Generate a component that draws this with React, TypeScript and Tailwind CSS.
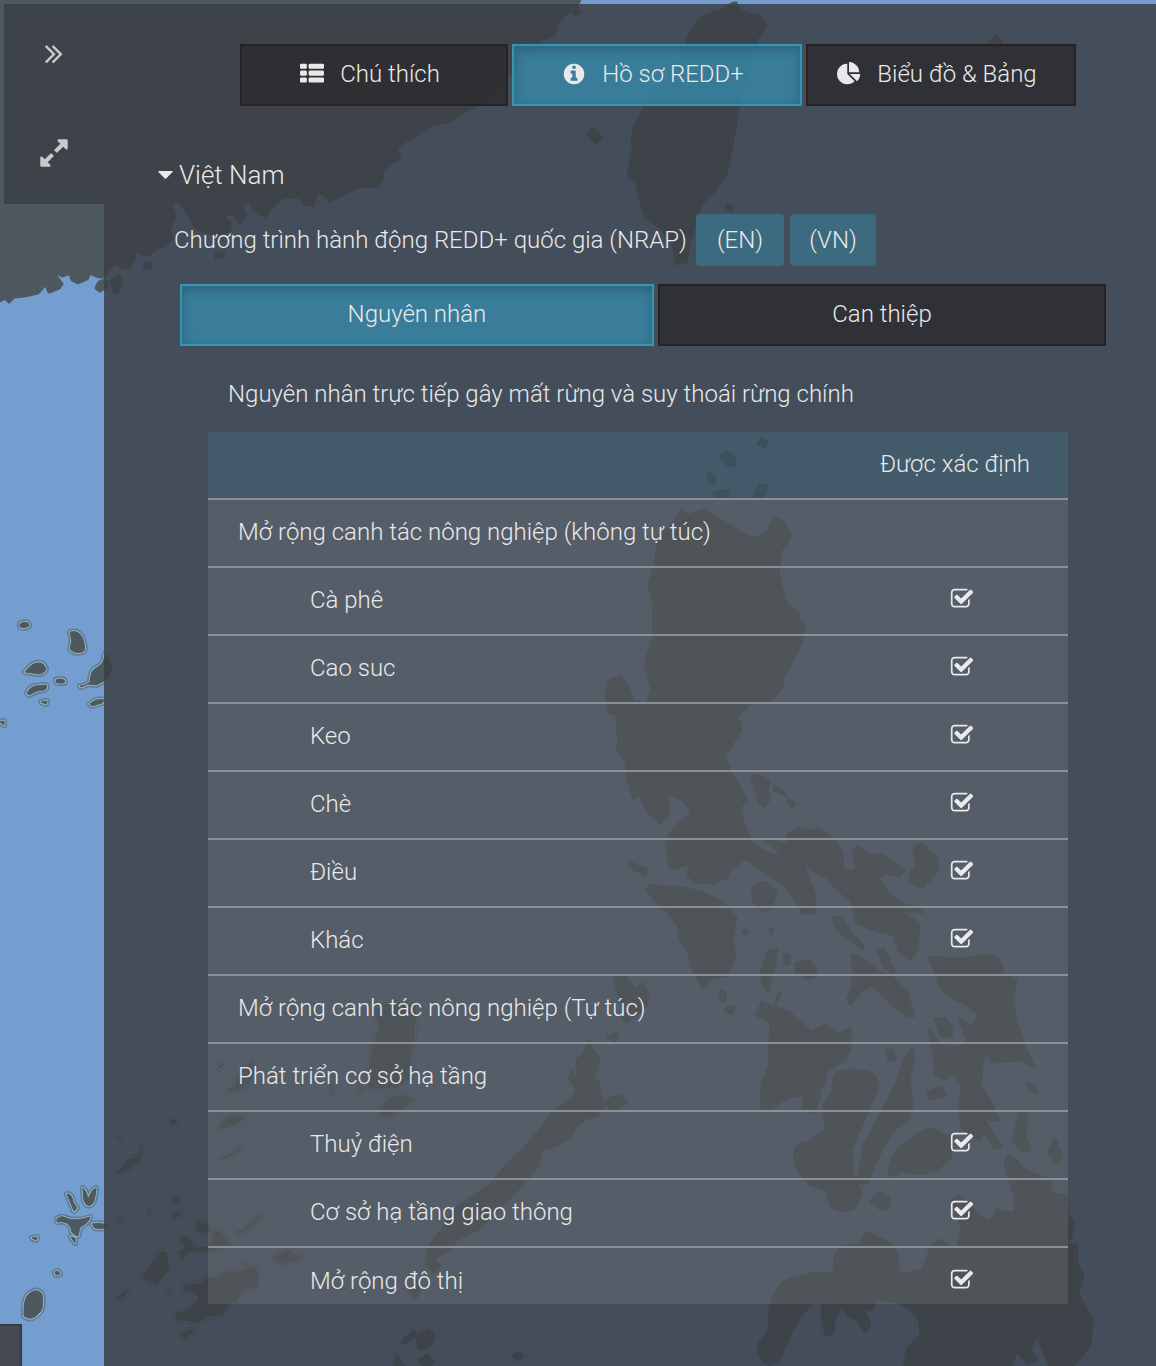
import React, { useState } from "react";

const LAND: string[] = [
  // mainland coast
  "M0 0H580L577 5 565 15 558 22 554 35 540 40 536 52 530 60 514 68 500 84 487 95 478 104 467 110 450 121 430 126 416 136 405 141 396 148 400 158 392 163 383 170 382 180 376 187 361 186 345 193 330 201 326 196 318 192 313 206 305 204 299 197 283 197 272 207 265 217 252 208 253 200 241 206 246 214 240 224 233 213 221 216 230 222 230 231 217 234 205 232 196 228 188 214 179 201 171 202 175 216 169 230 173 238 165 246 158 247 149 255 141 254 135 250 134 260 129 268 122 267 115 263 108 271 104 277 98 277 90 273 87 279 78 283 72 280 70 273 62 276 54 270 57 277 62 284 59 288 49 292 46 285 47 279 44 286 38 293 24 296 14 297 9 302 5 298 0 301Z",
  "M110 282l8-6 4 5-3 10-4 2-3-7zM96 288l3-6 6-2 2 7-7 4zM146 262l5 2-1 5-6-2zM216 254l8-2-2 5-6 1zM570 8l6-4 3 8-4 3z",
  // northern island
  "M701 18Q712 12 724 10Q731 2 736 3Q740 12 747 14L759 16 766 26 756 40 751 65 740 95 735 130 730 155 727 172 715 190 701 205 695 225 690 240 686 263 682 261 676 264 674 245 661 228 646 217 640 200 636 182 628 176 633 150 632 140 634 128 646 105 667 80 684 50 690 32Z",
  "M588 134l5-6 9 10-7 5zM727 205l5 1-1 5-4-2zM990 42l7-6 5 9-8 3zM720 456q6-5 11-2 6 6 4 11-6 3-9-2zM761 438l7 4-4 5-6-3zM709 473l6 5-1 6-6-6zM714 494q6-5 14-3v5l-12 1zM754 497l5-12 8 1-4 12z",
  // large central island
  "M676 520 682 510 687 516 704 510Q718 520 731 526Q748 540 760 537Q770 534 770 526L774 517 784 522 791 535 781 550 778 575 786 604 798 612 799 622 804 625 801 643 790 665 782 680 782 688 766 704 763 699 750 703 737 716 741 730 731 745 724 757 733 777 747 800 740 807 744 825 750 840Q756 852 784 858L776 848 763 838 788 845 788 835 800 828 812 831 819 829 834 840 843 855 842 869 849 872 857 868 852 852 858 847 870 855 883 855 904 870 900 876 887 873 876 877 891 895 903 904 923 912 895 910 915 920 919 925 917 950 910 960 899 951 894 935 876 930 857 923 851 900 838 890 826 876 812 870 803 860 806 873 815 895 814 913 803 913 792 895 781 882 765 872 746 858 729 870 727 877 712 883 695 882 688 875 690 862 680 867 670 868 666 840 675 827 691 815Q690 797 667 795L668 815 661 823 651 815 642 800 640 794 634 799 628 780 626 762 617 750 619 740 616 715 609 712 606 695 610 680 620 677 627 685 634 702 647 703 652 690 645 665 654 635 653 600 649 585 655 565 658 540Z",
  "M752 777q8-4 17 5l-2 8 2 10-5 6-5-4zM774 786l10 5 2 5-12-6zM788 800l7 3-3 4zM630 863l17 6-2 6-15-8zM753 888q6-6 14-5l9 10-4 12q-5 8-11 4l-8-8zM914 849q5-7 9-4l12 11q5 8 2 14l-8 10-6 7-14-5 2-10 6-5z",
  "M647 890Q648 884 655 886L682 888 704 893 722 902 736 918 732 940 735 955 727 975 712 978 703 988 698 980 691 965 689 953 680 940 678 925 668 912 653 898ZM745 929l3 2-2 3-3-2zM770 928l3 2-2 3zM768 951l9-1-3 18-6 24-5-8-2-11zM784 954l5 2 0 7-4 1zM796 963l12-2 8 8-1 7-8 3-11-8zM720 991l5 2v8l-5-2zM726 1008l8-1-2 6-6-1z",
  "M833 918 841 917 851 933 864 947 862 949 848 938 836 929ZM878 950 884 950 894 970 893 974 884 967ZM853 955 866 961 880 973 891 976 906 992 914 1016 906 1015 890 1002 872 985 860 992 850 1004 848 999 853 985Z",
  "M762 1002 768 1005 788 1012 798 1020 811 1032 826 1025 838 1035 850 1028 850 1050 844 1060 826 1071 824 1084 818 1090 820 1096 817 1106 812 1112 803 1109 805 1095Q784 1094 769 1112L762 1110 762 1085 769 1065 771 1023 757 1015ZM886 1049l7 3 2 7-6 1zM776 1003l3-11 2 1z",
  "M834 1075Q848 1068 858 1071Q872 1072 875 1077L878 1086 866 1115 851 1150 853 1175 861 1192 855 1208Q840 1214 831 1206L826 1190 811 1185Q798 1175 795 1160Q793 1142 808 1143L826 1130 824 1105 834 1090ZM871 1201l10-9 8 7-1 9-8 1z",
  "M912 1048 914 1060 909 1080 912 1105 908 1120 891 1132 879 1155 866 1184 858 1182 864 1145 883 1110 898 1080 905 1058ZM889 1172Q893 1150 908 1142Q922 1128 934 1130L952 1138 950 1158 936 1170Q920 1176 902 1170L893 1176Z",
  "M929 957 960 959 993 955Q1003 962 1003 974L1016 980 1012 1000 1016 1020 1024 1045 1033 1065 1020 1060 993 1062 984 1050 980 1085 990 1100 999 1120 984 1119 1001 1147 995 1148 984 1130 980 1140 963 1130 959 1110 963 1085 952 1073 946 1080 936 1075 934 1055 929 1030 940 1045 955 1047Q970 1045 967 1038L959 1020 972 1026 980 1015 963 1002Q942 996 938 980ZM935 1020l10-2 8 10-2 8-9 1zM928 1092l12-4 5 8-16 3zM1027 1083l8 4 2 6-8-3zM1013 1140 1020 1112 1027 1115 1025 1135 1030 1150 1024 1152ZM1048 1153l7-14 7 17-6 6z",
  "M1005 1165Q1006 1154 1012 1156L1024 1170 1049 1180 1052 1194 1066 1195 1068 1215 1073 1222 1071 1238 1062 1243 1077 1245 1077 1265 1083 1275 1078 1294 1092 1320 1090 1345 1073 1366H1050L1044 1352 1037 1335 1030 1350 1036 1360 1028 1364 1016 1350 1012 1366H904L908 1348 921 1335 920 1322Q910 1304 895 1302L876 1298 872 1310 864 1308 870 1325 866 1332 857 1320 847 1315 843 1305 834 1320 834 1333 826 1335 822 1320V1303L813 1302 801 1315 792 1330 783 1350Q780 1366 768 1364Q756 1358 759 1344L769 1330 770 1310Q776 1284 788 1280L811 1274 834 1273 835 1256 841 1247 860 1245 866 1232 883 1240Q896 1244 898 1262L900 1275 923 1270 931 1247 940 1240 957 1250 962 1230 952 1200 960 1197 978 1215 990 1222 998 1210Q1010 1214 1016 1212L1015 1195Z",
  // long south-western island
  "M590 1040 592 1050 599 1057 597 1068 593 1080 598 1082 600 1093 605 1105 598 1115 587 1118 577 1125 570 1138 557 1145 542 1149 539 1165 517 1190 500 1208 477 1230 456 1240 450 1250 433 1258 440 1266 435 1272 426 1265 428 1248 440 1232 458 1206 490 1185 507 1165 523 1150 540 1130 553 1112 570 1100 577 1090 570 1080 571 1071 578 1082 577 1060 583 1055Z",
  "M615 975 622 975 637 990 643 983 649 998 644 1008 627 1022 622 1018 624 1005 617 990ZM607 1037l10-5-2 10zM607 1100l13-5 7 7-10 8-8-1zM409 1290l8-9 2 10-4 8zM402 1342l11-11 3 3-10 9zM417 1336l12-6 5 6-3 9-12 4zM394 1364l3-9 6 11zM418 1360l10-5 5 8-8 3zM512 1356l7-4 4 4-5 4z",
];

const REEFS: string[] = [
  "M20 624q4-3 8-1l1 3q-4 3-9 1zM70 632q8-2 12 5 4 10 2 14-8 4-14-2 3-8 0-17zM25 672q6-8 12-9 7-1 9 6-1 4-7 5zM27 693q3-6 8-7l11-1q2 4-2 5l-7 1-8 4zM56 680q4-2 8 0 2 3-1 3h-6zM41 702l6-1-1 3zM80 686q6 0 10-4 0-12 8-15 6-3 7-13 6 5 7 14-2 10-6 12l-10 5-8-1-7 3zM90 704q6-6 14-4l-2 3-10 3zM0 722l4-1 0 4z",
  "M67 1194q5 0 6 8l4 6-3 3zM83 1188q4 4 5 12 3-10 8-12-1 12-3 15-5 6-9-2zM57 1219q4-4 9-1 8 4 24-1-1 6-10 10l-2 9q-7-2-7-8-4-8-14-6zM92 1224q8-2 15 1-2 5-12 3zM71 1237l4 1 0 5zM32 1238l5-1-1 3zM55 1272l3-1 2 3-4 1zM24 1311q0-14 6-18 7-5 12 1 2 14-2 18-8 10-16 4z",
  "M117 1173l10-13 11-3 5-12-4 15-10 9-11 5zM171 1119l6 2-2 4-5-2zM118 1137l3-1 0 3zM164 1116l1 2M173 1195l6 2-1 8-4-4zM173 1215l9-4-3 5-6 2zM148 1210l2 3-2 3M117 1221l5-1-2 3zM196 1222l10 2 6 6-7 4-9-4zM181 1237l8 1 4 8 5 2 14-3 5 4-12 3-16-1-7 8-3-7 6-5zM142 1277l12-17 8-9 5 2 1 10 2 7-9 9-5 5zM118 1296l10-6-2 5-8 4zM212 1236l7-7 6 9 5 8-10 0-8 0zM234 1229l9 2 8-10 10-8 0 7-11 9-12 5zM184 1285l16-2 9-6 6 2 10-8 14 0 14-5 6 9-2 12-14 3-6 12-7 1-6 11-16 3-10 6-14-3-9 1 2-8 14-5 8-10-8-6-8-2zM181 1335l4-4 9-2-4 6-6 4zM272 1258l12-7 6-2 2 6 10 0-3 7-12 0-4 2zM241 1262l3-1 2 2zM219 1128l4-9 10-4 12 2-8 7-12 4zM220 1157l8-2 14-9-3 6-11 5-8 3zM226 1092l8-5 6-14 13-12 3 10-7 12-11 8zM217 1066l8-2-5 5zM167 1292l3-1 0 3z",
  "M372 1045 380 1028 374 1010 392 1002 416 1006 414 1040 410 1055 411 1078 395 1088 367 1088ZM378 1112l9-13 12-3 4-1 11 4-10 10-14 7-11 0zM331 1083l2 10-2 2zM359 1080l2 10-2 5z",
];

const CHECK =
  "M1472 930v318q0 119-84.500 203.500t-203.500 84.500h-832q-119 0-203.500-84.500t-84.500-203.500v-832q0-119 84.500-203.500t203.500-84.500h832q63 0 117 25 15 7 18 23 3 17-9 29l-49 49q-10 10-23 10-3 0-9-2-23-6-45-6h-832q-66 0-113 47t-47 113v832q0 66 47 113t113 47h832q66 0 113-47t47-113v-254q0-13 9-22l64-64q10-10 23-10 6 0 12 3 20 8 20 29zm231-489l-814 814q-24 24-57 24t-57-24l-430-430q-24-24-24-57t24-57l110-110q24-24 57-24t57 24l263 263 647-647q24-24 57-24t57 24l110 110q24 24 24 57t-24 57z";
const ANGLES =
  "M979 960q0 13-10 23l-466 466q-10 10-23 10t-23-10l-50-50q-10-10-10-23t10-23l393-393-393-393q-10-10-10-23t10-23l50-50q10-10 23-10t23 10l466 466q10 10 10 23zm384 0q0 13-10 23l-466 466q-10 10-23 10t-23-10l-50-50q-10-10-10-23t10-23l393-393-393-393q-10-10-10-23t10-23l50-50q10-10 23-10t23 10l466 466q10 10 10 23z";
const EXPAND =
  "M883 1056q0 13-10 23l-332 332 144 144q19 19 19 45t-19 45-45 19h-448q-26 0-45-19t-19-45v-448q0-26 19-45t45-19 45 19l144 144 332-332q10-10 23-10t23 10l114 114q10 10 10 23zm781-864v448q0 26-19 45t-45 19-45-19l-144-144-332 332q-10 10-23 10t-23-10l-114-114q-10-10-10-23t10-23l332-332-144-144q-19-19-19-45t19-45 45-19h448q26 0 45 19t19 45z";
const LIST =
  "M512 1248v192q0 40-28 68t-68 28h-320q-40 0-68-28t-28-68v-192q0-40 28-68t68-28h320q40 0 68 28t28 68zm0-512v192q0 40-28 68t-68 28h-320q-40 0-68-28t-28-68v-192q0-40 28-68t68-28h320q40 0 68 28t28 68zm1280 512v192q0 40-28 68t-68 28h-960q-40 0-68-28t-28-68v-192q0-40 28-68t68-28h960q40 0 68 28t28 68zm-1280-1024v192q0 40-28 68t-68 28h-320q-40 0-68-28t-28-68v-192q0-40 28-68t68-28h320q40 0 68 28t28 68zm1280 512v192q0 40-28 68t-68 28h-960q-40 0-68-28t-28-68v-192q0-40 28-68t68-28h960q40 0 68 28t28 68zm0-512v192q0 40-28 68t-68 28h-960q-40 0-68-28t-28-68v-192q0-40 28-68t68-28h960q40 0 68 28t28 68z";
const INFO =
  "M1152 1376v-160q0-14-9-23t-23-9h-96v-512q0-14-9-23t-23-9h-320q-14 0-23 9t-9 23v160q0 14 9 23t23 9h96v320h-96q-14 0-23 9t-9 23v160q0 14 9 23t23 9h448q14 0 23-9t9-23zm-128-896v-160q0-14-9-23t-23-9h-192q-14 0-23 9t-9 23v160q0 14 9 23t23 9h192q14 0 23-9t9-23zm640 416q0 209-103 385.500t-279.500 279.500-385.500 103-385.500-103-279.500-279.500-103-385.500 103-385.500 279.500-279.500 385.500-103 385.500 103 279.500 279.500 103 385.500z";
const PIE =
  "M768 890l546 546q-106 108-247.500 168t-298.500 60q-209 0-385.500-103t-279.500-279.500-103-385.500 103-385.500 279.500-279.500 385.500-103v762zm187 6h773q0 157-60 298.500t-168 247.500zm709-128h-768v-768q209 0 385.500 103t279.500 279.500 103 385.500z";

function Icon({ d, className }: { d: string; className: string }) {
  return (
    <svg viewBox="0 0 1792 1792" className={className} fill="currentColor" aria-hidden="true">
      <path d={d} />
    </svg>
  );
}

function MapBackdrop() {
  return (
    <svg
      className="absolute inset-0 h-full w-full"
      viewBox="0 0 1156 1366"
      preserveAspectRatio="xMinYMin slice"
      aria-hidden="true"
    >
      <rect width="1156" height="1366" fill="#749dd0" />
      {REEFS.map((d) => (
        <g key={d} strokeLinejoin="round">
          <path d={d} fill="none" stroke="#5f7b91" strokeWidth="6" />
          <path d={d} fill="#4e585f" stroke="#8db4c4" strokeWidth="3" />
          <path d={d} fill="#4e585f" stroke="#4e585f" strokeWidth="1" />
        </g>
      ))}
      {LAND.map((d) => (
        <path key={d} d={d} fill="#4e585f" stroke="#4e585f" strokeWidth="3" strokeLinejoin="round" />
      ))}
    </svg>
  );
}

const MAIN_TABS = [
  { label: "Chú thích", icon: LIST, size: "w-[268px]" },
  { label: "Hồ sơ REDD+", icon: INFO, size: "w-[290px]" },
  { label: "Biểu đồ & Bảng", icon: PIE, size: "w-[270px]" },
];
const SUB_TABS = [
  { label: "Nguyên nhân", size: "grow-[474]" },
  { label: "Can thiệp", size: "grow-[448]" },
];

const ACTIVE =
  "border-[#3296b7] bg-[#378aaa]/80 shadow-[inset_0_4px_12px_rgba(0,0,0,0.2)]";
const INACTIVE = "border-[#272322] bg-[#2c2a2e]/80";

const ROWS = [
  { label: "Mở rộng canh tác nông nghiệp (không tự túc)", group: true },
  { label: "Cà phê" },
  { label: "Cao suc" },
  { label: "Keo" },
  { label: "Chè" },
  { label: "Điều" },
  { label: "Khác" },
  { label: "Mở rộng canh tác nông nghiệp (Tự túc)", group: true },
  { label: "Phát triển cơ sở hạ tầng", group: true },
  { label: "Thuỷ điện" },
  { label: "Cơ sở hạ tầng giao thông" },
  { label: "Mở rộng đô thị" },
];

export default function App() {
  const [tab, setTab] = useState(1);
  const [sub, setSub] = useState(0);

  return (
    <div className="relative flex h-screen overflow-hidden pt-1 pl-1 font-['Roboto',sans-serif] text-2xl font-light text-[#e9e9e9]">
      <MapBackdrop />

      <aside className="relative flex h-[200px] w-[100px] shrink-0 flex-col bg-[#3c4045]/85 text-[#c9cacb]">
        <button type="button" aria-label="Thu gọn" className="flex h-[100px] items-center justify-center pb-0.5">
          <Icon d={ANGLES} className="size-8" />
        </button>
        <button type="button" aria-label="Mở rộng" className="flex h-[100px] items-center justify-center pb-0.5">
          <Icon d={EXPAND} className="size-8" />
        </button>
      </aside>

      <main className="relative flex min-w-0 flex-1 flex-col bg-[#3c4045]/85 pt-10 pb-[62px]">
        <nav className="mr-20 ml-[136px] flex gap-1">
          {MAIN_TABS.map((t, i) => (
            <button
              key={t.label}
              type="button"
              onClick={() => setTab(i)}
              className={`flex h-[62px] items-center justify-center gap-4 border-2 pr-2 pb-0.5 whitespace-nowrap ${t.size} ${tab === i ? ACTIVE : INACTIVE}`}
            >
              <Icon d={t.icon} className="size-6" />
              {t.label}
            </button>
          ))}
        </nav>

        <button type="button" className="mt-[49px] ml-[54px] flex h-10 items-center gap-1.5 self-start text-[26px]">
          <svg viewBox="0 0 15 8" className="h-2 w-[15px]" fill="currentColor" aria-hidden="true">
            <path d="M1 0h13q1 0 .6 1L8.200 7.500q-.7.600-1.400 0L.4 1Q0 0 1 0z" />
          </svg>
          Việt Nam
        </button>

        <div className="mt-[19px] ml-[70px] flex h-[52px] items-center gap-1.5 leading-[52px]">
          <span className="min-w-[516px] whitespace-nowrap">Chương trình hành động REDD+ quốc gia (NRAP)</span>
          <a href="#en" className="w-[88px] rounded-sm bg-[#3c6b7f] text-center">(EN)</a>
          <a href="#vn" className="w-[86px] rounded-sm bg-[#3c6b7f] text-center">(VN)</a>
        </div>

        <div className="mt-[18px] mr-[50px] ml-[76px] flex gap-1">
          {SUB_TABS.map((t, i) => (
            <button
              key={t.label}
              type="button"
              onClick={() => setSub(i)}
              className={`h-[62px] basis-0 border-2 pb-0.5 ${t.size} ${sub === i ? ACTIVE : INACTIVE}`}
            >
              {t.label}
            </button>
          ))}
        </div>

        <h2 className="mt-7 mb-[18px] ml-[124px] leading-10">
          Nguyên nhân trực tiếp gây mất rừng và suy thoái rừng chính
        </h2>

        <div className="mr-[88px] ml-[104px] min-h-0 flex-1 overflow-y-auto [scrollbar-width:none]">
          <table className="w-full table-fixed">
            <colgroup>
              <col />
              <col className="w-[212px]" />
            </colgroup>
            <thead>
              <tr className="h-[67px] bg-[#3b93b3]/18">
                <th scope="col" aria-label="Nguyên nhân" />
                <th scope="col" className="pr-3.5 pb-0.5 text-center font-light">Được xác định</th>
              </tr>
            </thead>
            <tbody>
              {ROWS.map((r) => (
                <tr key={r.label} className="h-[68px] border-t-2 border-[#8b8f96] bg-[#f0f0f0]/10">
                  <td className={r.group ? "pb-0.5 pl-[30px]" : "pb-0.5 pl-[102px]"}>{r.label}</td>
                  <td className="pb-1">
                    {!r.group && (
                      <span role="img" aria-label="Được xác định" className="flex justify-center">
                        <Icon d={CHECK} className="size-6" />
                      </span>
                    )}
                  </td>
                </tr>
              ))}
            </tbody>
          </table>
        </div>
      </main>

      <div className="absolute bottom-0 left-0 h-[42px] w-[22px] border-t-2 border-r-2 border-[#363b40] bg-[#454954]" />
    </div>
  );
}
